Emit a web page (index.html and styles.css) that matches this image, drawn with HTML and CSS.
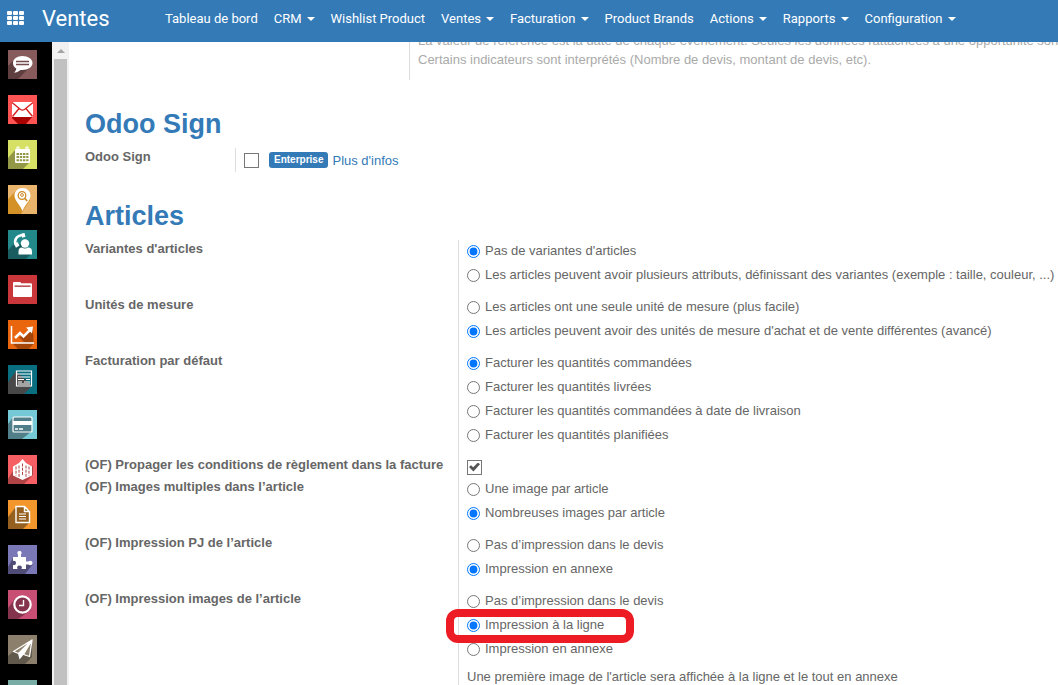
FILE: index.html
```html
<!DOCTYPE html>
<html lang="fr">
<head>
<meta charset="utf-8">
<meta name="viewport" content="width=device-width, initial-scale=1">
<title>Ventes - Configuration</title>
<link rel="stylesheet" href="styles.css">
</head>
<body>
<header class="navbar">
  <button class="apps" type="button" aria-label="Applications">
    <svg width="18" height="14" viewBox="0 0 18 14" fill="#fff"><rect x="0" y="0" width="5" height="4" rx="1"/><rect x="6" y="0" width="5" height="4" rx="1"/><rect x="12" y="0" width="5" height="4" rx="1"/><rect x="0" y="5" width="5" height="4" rx="1"/><rect x="6" y="5" width="5" height="4" rx="1"/><rect x="12" y="5" width="5" height="4" rx="1"/><rect x="0" y="10" width="5" height="4" rx="1"/><rect x="6" y="10" width="5" height="4" rx="1"/><rect x="12" y="10" width="5" height="4" rx="1"/></svg>
  </button>
  <a class="brand" href="#">Ventes</a>
  <nav class="menu">
    <a href="#">Tableau de bord</a>
    <a class="has-caret" href="#">CRM</a>
    <a href="#">Wishlist Product</a>
    <a class="has-caret" href="#">Ventes</a>
    <a class="has-caret" href="#">Facturation</a>
    <a href="#">Product Brands</a>
    <a class="has-caret" href="#">Actions</a>
    <a class="has-caret" href="#">Rapports</a>
    <a class="has-caret" href="#">Configuration</a>
  </nav>
</header>
<div class="workspace">
  <aside class="sidebar">
    <a href="#" aria-label="Discussion"><svg viewBox="0 0 29 29"><path fill="#875a5b" d="M0 0h29v29H0z"/><path fill="#5e3e3f" d="M5 11 0 16v13h10l14-14z"/><path fill="#fff" d="M14.500 6C9 6 5 9 5 13c0 2.400 1.200 4.400 3.300 5.600-.2 1.800-1 3-2.300 4 2.800-.2 5-1.200 6.400-2.700l2.100.1c5.500 0 10-3 10-7s-4.500-7-10-7z"/><path stroke="#754a4b" stroke-width="1.300" d="M8 11.500h13M8 14.500h13"/></svg></a>
    <a href="#" aria-label="Messagerie"><svg viewBox="0 0 29 29"><path fill="#ff5454" d="M0 0h29v29H0z"/><path fill="#a90000" d="M4 21h21l-7 8H10l-6-6z"/><path fill="#fff" d="M4 7h21v15H4z"/><path fill="none" stroke="#d81f1f" stroke-width="1.400" d="m4 7.500 8.500 7q2 1.200 4 0l8.500-7M4.500 21.500l6.500-8M24.500 21.500l-6.500-8"/></svg></a>
    <a href="#" aria-label="Calendrier"><svg viewBox="0 0 29 29"><path fill="#d5e064" d="M0 0h29v29H0z"/><path fill="#929846" d="M7 10 0 18v11h15l7-7z"/><path fill="#fff" d="M8 9h13a1 1 0 0 1 1 1v12a1 1 0 0 1-1 1H8a1 1 0 0 1-1-1V10a1 1 0 0 1 1-1z"/><path fill="none" stroke="#fff" stroke-width="1.200" d="M9 10V7.500q1-1.500 2 0V10m7 0V7.500q1-1.500 2 0V10"/><path fill="#929846" d="M8.500 13H11v2H8.500zm3.300 0h2.400v2h-2.400zm3.200 0h2.400v2H15zm3.200 0h2.300v2h-2.300zM8.500 16H11v2H8.500zm3.300 0h2.400v2h-2.400zm3.200 0h2.400v2H15zm3.200 0h2.300v2h-2.300zM8.500 19.200H11v2H8.500zm3.300 0h2.400v2h-2.400zm3.200 0h2.400v2H15zm3.200 0h2.300v2h-2.300z"/></svg></a>
    <a href="#" aria-label="Cartographie"><svg viewBox="0 0 29 29"><path fill="#e9b56d" d="M0 0h29v29H0z"/><path fill="#d49125" d="M8 6 0 14v15h13l9-14z"/><path fill="#fff" d="M14.500 3C10 3 6.500 6.300 6.500 10.500c0 5 5 8.500 8 15.500 3-7 8-10.500 8-15.500C22.500 6.300 19 3 14.500 3z"/><circle cx="14" cy="10.500" r="3.800" fill="none" stroke="#cf8b25" stroke-width="1.300"/><circle cx="14" cy="10" r="1.400" fill="none" stroke="#cf8b25"/><path stroke="#cf8b25" stroke-width="1.800" d="m16.500 13 2.700 3"/></svg></a>
    <a href="#" aria-label="Contacts"><svg viewBox="0 0 29 29"><path fill="#23888a" d="M0 0h29v29H0z"/><path fill="#195d60" d="M6 14 0 20v9h18l6-6-9-9z"/><path fill="none" stroke="#fff" stroke-width="2.600" d="M8.300 15C5.500 11 8 5.500 15 5"/><path fill="#fff" d="m6 14 3.500-2 2 3.500-3.500 2.200zm7.500-10.500 3-.4 1 3.700-3.500 1z"/><circle cx="17" cy="13.500" r="4.200" fill="#fff"/><path fill="#fff" d="M10.500 24.500v-3q0-4 3.500-4 3 2 6 0 4 0 4 4v3z"/></svg></a>
    <a href="#" aria-label="Documents"><svg viewBox="0 0 29 29"><path fill="#c9373b" d="M0 0h29v29H0z"/><path fill="#fff" d="M5 8q0-1 1-1h6q1 0 1 1.200h9.500q1.500 0 1.500 1V21q0 1-1 1H6q-1 0-1-1z"/><path fill="#a82c30" d="M6.500 10.500h16v1.300h-16z"/></svg></a>
    <a href="#" aria-label="Ventes"><svg viewBox="0 0 29 29"><path fill="#e9660f" d="M0 0h29v29H0z"/><path fill="#a54508" d="m4 23 20-15 1.500 8v8l-5 5H10z"/><path fill="#e9660f" d="m12 18 4 4-4 1H4l3-5z"/><path fill="none" stroke="#fff" stroke-width="1.500" d="M3.500 6v17h22.500"/><path fill="none" stroke="#fff" stroke-width="2.500" d="m7 18 5-5 3.500 3.500 7-7"/><path fill="#fff" d="m18 7.500 7-1-1 7z"/></svg></a>
    <a href="#" aria-label="Site web"><svg viewBox="0 0 29 29"><path fill="#096f80" d="M0 0h29v29H0z"/><path fill="#484848" d="M8 6 0 17v12h16l8-8z"/><path fill="none" stroke="#fff" stroke-width="1.200" d="M8.500 6h15v15h-15zM8 9h16M10 12h12M10 14.500h6m2 0h4M10 17h4m2 0h6M10 19h12"/></svg></a>
    <a href="#" aria-label="Paiements"><svg viewBox="0 0 29 29"><path fill="#75c9d6" d="M0 0h29v29H0z"/><path fill="#507f8a" d="m5 7-5 7v15h14l10-8V9z"/><rect x="5" y="7" width="19" height="15" rx="1" fill="#507f8a" stroke="#fff" stroke-width="1.200"/><path fill="#fff" d="M5 11h19v4H5z"/><path stroke="#fff" stroke-width="1.300" d="M7 19h3m1 0h4"/></svg></a>
    <a href="#" aria-label="Inventaire"><svg viewBox="0 0 29 29"><path fill="#f65f63" d="M0 0h29v29H0z"/><path fill="#b04346" d="m5 16-5 8v5h16l9-9V11z"/><path fill="#fff" d="m14.500 4 3.500 4 6 3.500v9L14.500 25 5 20.500v-9L11 8z"/><path stroke="#b04346" stroke-width="1" stroke-dasharray="3 1.200" d="M8 11.500v9M11 10.500v12M18 10.500v12M21 11.500v9M14.500 8.500v12"/></svg></a>
    <a href="#" aria-label="Notes"><svg viewBox="0 0 29 29"><path fill="#f3972d" d="M0 0h29v29H0z"/><path fill="#95601f" d="M7 8 0 17v12h15l7-7V10z"/><path fill="#95601f" stroke="#fff" stroke-width="1.400" d="M8 6.500h8.500l5 5V22.500H8zM16.500 6.500v5h5"/><path stroke="#fff" stroke-width="1.200" d="M11 14h7m-7 2.500h7M11 19h7"/></svg></a>
    <a href="#" aria-label="Modules"><svg viewBox="0 0 29 29"><path fill="#7b78b8" d="M0 0h29v29H0z"/><path fill="#4f4d78" d="m5 13-5 9v7h17l8-10z"/><path fill="#fff" d="M5 12h5V9.500C9 8.500 9 6 11.500 6S14 8.500 13 9.500V12h5v4.500h2.500c1-1.200 4-1 4 1.500s-3 2.800-4 1.500H18V24h-4.500c1-2 0-3.500-2-3.500s-3 1.500-2 3.500H5v-4c2 .5 3-.5 3-2s-1-2.500-3-2z"/></svg></a>
    <a href="#" aria-label="Feuilles de temps"><svg viewBox="0 0 29 29"><path fill="#c84e73" d="M0 0h29v29H0z"/><path fill="#84344c" d="m7 9-7 9v11h10l13-9z"/><circle cx="14.500" cy="14.500" r="8.200" fill="#84344c" stroke="#fff" stroke-width="2.200"/><path fill="none" stroke="#fff" stroke-width="1.400" d="M15.500 10v5.500H11"/></svg></a>
    <a href="#" aria-label="Envois"><svg viewBox="0 0 29 29"><path fill="#8c7f6b" d="M0 0h29v29H0z"/><path fill="#60594c" d="m5 17-5 4v8h17l7-7V7z"/><path fill="#8c7f6b" stroke="#fff" stroke-width="1.300" stroke-linejoin="round" d="M24 5 5.500 16.500l5 2L24 5l-8.500 14.500 6 2z"/><path fill="#fff" d="M24 5 10 18.500l1.500 6 3-3.500z"/></svg></a>
    <a href="#" aria-label="Autres"><svg viewBox="0 0 29 29"><path fill="#7aaca6" d="M0 0h29v29H0z"/></svg></a>
  </aside>
  <div class="scrollbar"><span class="scroll-up"></span><span class="thumb"></span></div>
  <main class="content">
    <p class="hint">La valeur de référence est la date de chaque évènement. Seules les données rattachées à une opportunité sont<br>Certains indicateurs sont interprétés (Nombre de devis, montant de devis, etc).</p>

    <h1>Odoo Sign</h1>
    <div class="row sign">
      <label class="name" for="sign">Odoo Sign</label>
      <div class="field enterprise">
        <input class="check" type="checkbox" id="sign">
        <span class="badge">Enterprise</span>
        <a href="#">Plus d'infos</a>
      </div>
    </div>

    <h1>Articles</h1>
    <div class="row" role="radiogroup" aria-labelledby="n1">
      <span class="name" id="n1">Variantes d'articles</span>
      <div class="field">
        <label class="option"><input type="radio" name="variants" checked>Pas de variantes d'articles</label>
        <label class="option"><input type="radio" name="variants">Les articles peuvent avoir plusieurs attributs, définissant des variantes (exemple : taille, couleur, ...)</label>
      </div>
    </div>
    <div class="row" role="radiogroup" aria-labelledby="n2">
      <span class="name" id="n2">Unités de mesure</span>
      <div class="field">
        <label class="option"><input type="radio" name="units">Les articles ont une seule unité de mesure (plus facile)</label>
        <label class="option"><input type="radio" name="units" checked>Les articles peuvent avoir des unités de mesure d'achat et de vente différentes (avancé)</label>
      </div>
    </div>
    <div class="row" role="radiogroup" aria-labelledby="n3">
      <span class="name" id="n3">Facturation par défaut</span>
      <div class="field">
        <label class="option"><input type="radio" name="billing" checked>Facturer les quantités commandées</label>
        <label class="option"><input type="radio" name="billing">Facturer les quantités livrées</label>
        <label class="option"><input type="radio" name="billing">Facturer les quantités commandées à date de livraison</label>
        <label class="option"><input type="radio" name="billing">Facturer les quantités planifiées</label>
      </div>
    </div>
    <div class="row">
      <label class="name" for="terms">(OF) Propager les conditions de règlement dans la facture</label>
      <div class="field single"><input class="check" type="checkbox" id="terms" checked></div>
    </div>
    <div class="row" role="radiogroup" aria-labelledby="n4">
      <span class="name" id="n4">(OF) Images multiples dans l’article</span>
      <div class="field">
        <label class="option"><input type="radio" name="images">Une image par article</label>
        <label class="option"><input type="radio" name="images" checked>Nombreuses images par article</label>
      </div>
    </div>
    <div class="row" role="radiogroup" aria-labelledby="n5">
      <span class="name" id="n5">(OF) Impression PJ de l’article</span>
      <div class="field">
        <label class="option"><input type="radio" name="attachments">Pas d’impression dans le devis</label>
        <label class="option"><input type="radio" name="attachments" checked>Impression en annexe</label>
      </div>
    </div>
    <div class="row" role="radiogroup" aria-labelledby="n6">
      <span class="name" id="n6">(OF) Impression images de l’article</span>
      <div class="field">
        <label class="option"><input type="radio" name="print">Pas d’impression dans le devis</label>
        <label class="option marked"><input type="radio" name="print" checked>Impression à la ligne</label>
        <label class="option"><input type="radio" name="print">Impression en annexe</label>
        <p class="note">Une première image de l'article sera affichée à la ligne et le tout en annexe</p>
      </div>
    </div>
  </main>
</div>
</body>
</html>
```
FILE: styles.css
```css
* {
  box-sizing: border-box;
}

body {
  margin: 0;
  height: 100vh;
  display: flex;
  flex-direction: column;
  overflow: hidden;
  background: #fff;
  color: #666;
  font: 13px/19px "Liberation Sans", Arial, sans-serif;
}

a {
  color: #337ab7;
  text-decoration: none;
}

.navbar {
  flex: none;
  display: flex;
  align-items: center;
  height: 42px;
  padding: 0 7px 6px;
  background: #337ab7;
  font-family: Roboto, sans-serif;
}

.navbar a {
  color: #fff;
  white-space: nowrap;
}

.apps {
  display: flex;
  padding: 0;
  border: 0;
  background: none;
}

.navbar .brand {
  width: 123px;
  margin-left: 17px;
  font-size: 22px;
}

.menu {
  display: flex;
  gap: 16px;
}

.has-caret::after {
  content: "";
  display: inline-block;
  margin-left: 5px;
  vertical-align: middle;
  border: 4px solid transparent;
  border-top-color: #fff;
  border-bottom: 0;
}

.workspace {
  flex: 1;
  display: flex;
  min-height: 0;
}

.sidebar {
  flex: none;
  display: flex;
  flex-direction: column;
  gap: 16px;
  width: 52px;
  padding: 8px;
  overflow: hidden;
  background: #000;
}

.sidebar a {
  flex: none;
  width: 29px;
  height: 29px;
}

.sidebar svg {
  display: block;
}

.scrollbar {
  flex: none;
  display: flex;
  flex-direction: column;
  width: 17px;
  padding: 0 2px;
  background: #f1f1f1;
}

.scroll-up {
  width: 8px;
  margin: 7px auto 6px 3px;
  border: 4px solid transparent;
  border-top: 0;
  border-bottom-color: #a3a3a3;
}

.thumb {
  flex: 1;
  background: #c1c1c1;
}

.content {
  flex: 1;
  min-width: 0;
  padding-left: 16px;
  overflow: hidden;
}

.hint {
  margin: -11px 0 0 324px;
  padding: 0 0 11px 8px;
  border-left: 1px solid #ddd;
  color: #aaa;
  white-space: nowrap;
}

h1 {
  margin: 28px 0 8px;
  color: #337ab7;
  font-size: 27px;
  line-height: 32px;
}

.row {
  display: grid;
  grid-template-columns: 373px 1fr;
}

.sign {
  grid-template-columns: 150px 1fr;
}

.name {
  font-weight: bold;
  line-height: 17px;
}

.field {
  padding: 0 0 8px 8px;
  border-left: 1px solid #ddd;
  white-space: nowrap;
}

.enterprise {
  display: flex;
  align-items: center;
  gap: 4px;
  height: 24px;
  padding-bottom: 0;
}

.single {
  display: flex;
  align-items: center;
  height: 22px;
  padding-bottom: 0;
}

.option {
  display: flex;
  align-items: center;
  gap: 5px;
  width: max-content;
  height: 24px;
  padding-bottom: 4px;
}

.option input {
  width: 13px;
  height: 13px;
  margin: 2px 0 0;
}

.check {
  appearance: none;
  display: block;
  width: 15px;
  height: 15px;
  margin: 0;
  border: 1px solid #777;
  background: #fff;
}

.enterprise .check {
  margin-right: 6px;
}

.check:checked::after {
  content: "";
  display: block;
  width: 11px;
  height: 9px;
  margin: 2px 1px;
  background: #555;
  clip-path: polygon(0 50%, 18% 30%, 38% 52%, 82% 0, 100% 20%, 40% 100%);
}

.badge {
  padding: 0 5px;
  border-radius: 3px;
  background: #337ab7;
  color: #fff;
  font-size: 10px;
  font-weight: bold;
  line-height: 16px;
}

.marked {
  position: relative;
}

.marked::after {
  content: "";
  position: absolute;
  inset: -5px -30px -5px -21px;
  border: 8px solid #ed1c24;
  border-radius: 12px;
  z-index: 1;
}

.note {
  margin: 5px 0 0;
}
```
